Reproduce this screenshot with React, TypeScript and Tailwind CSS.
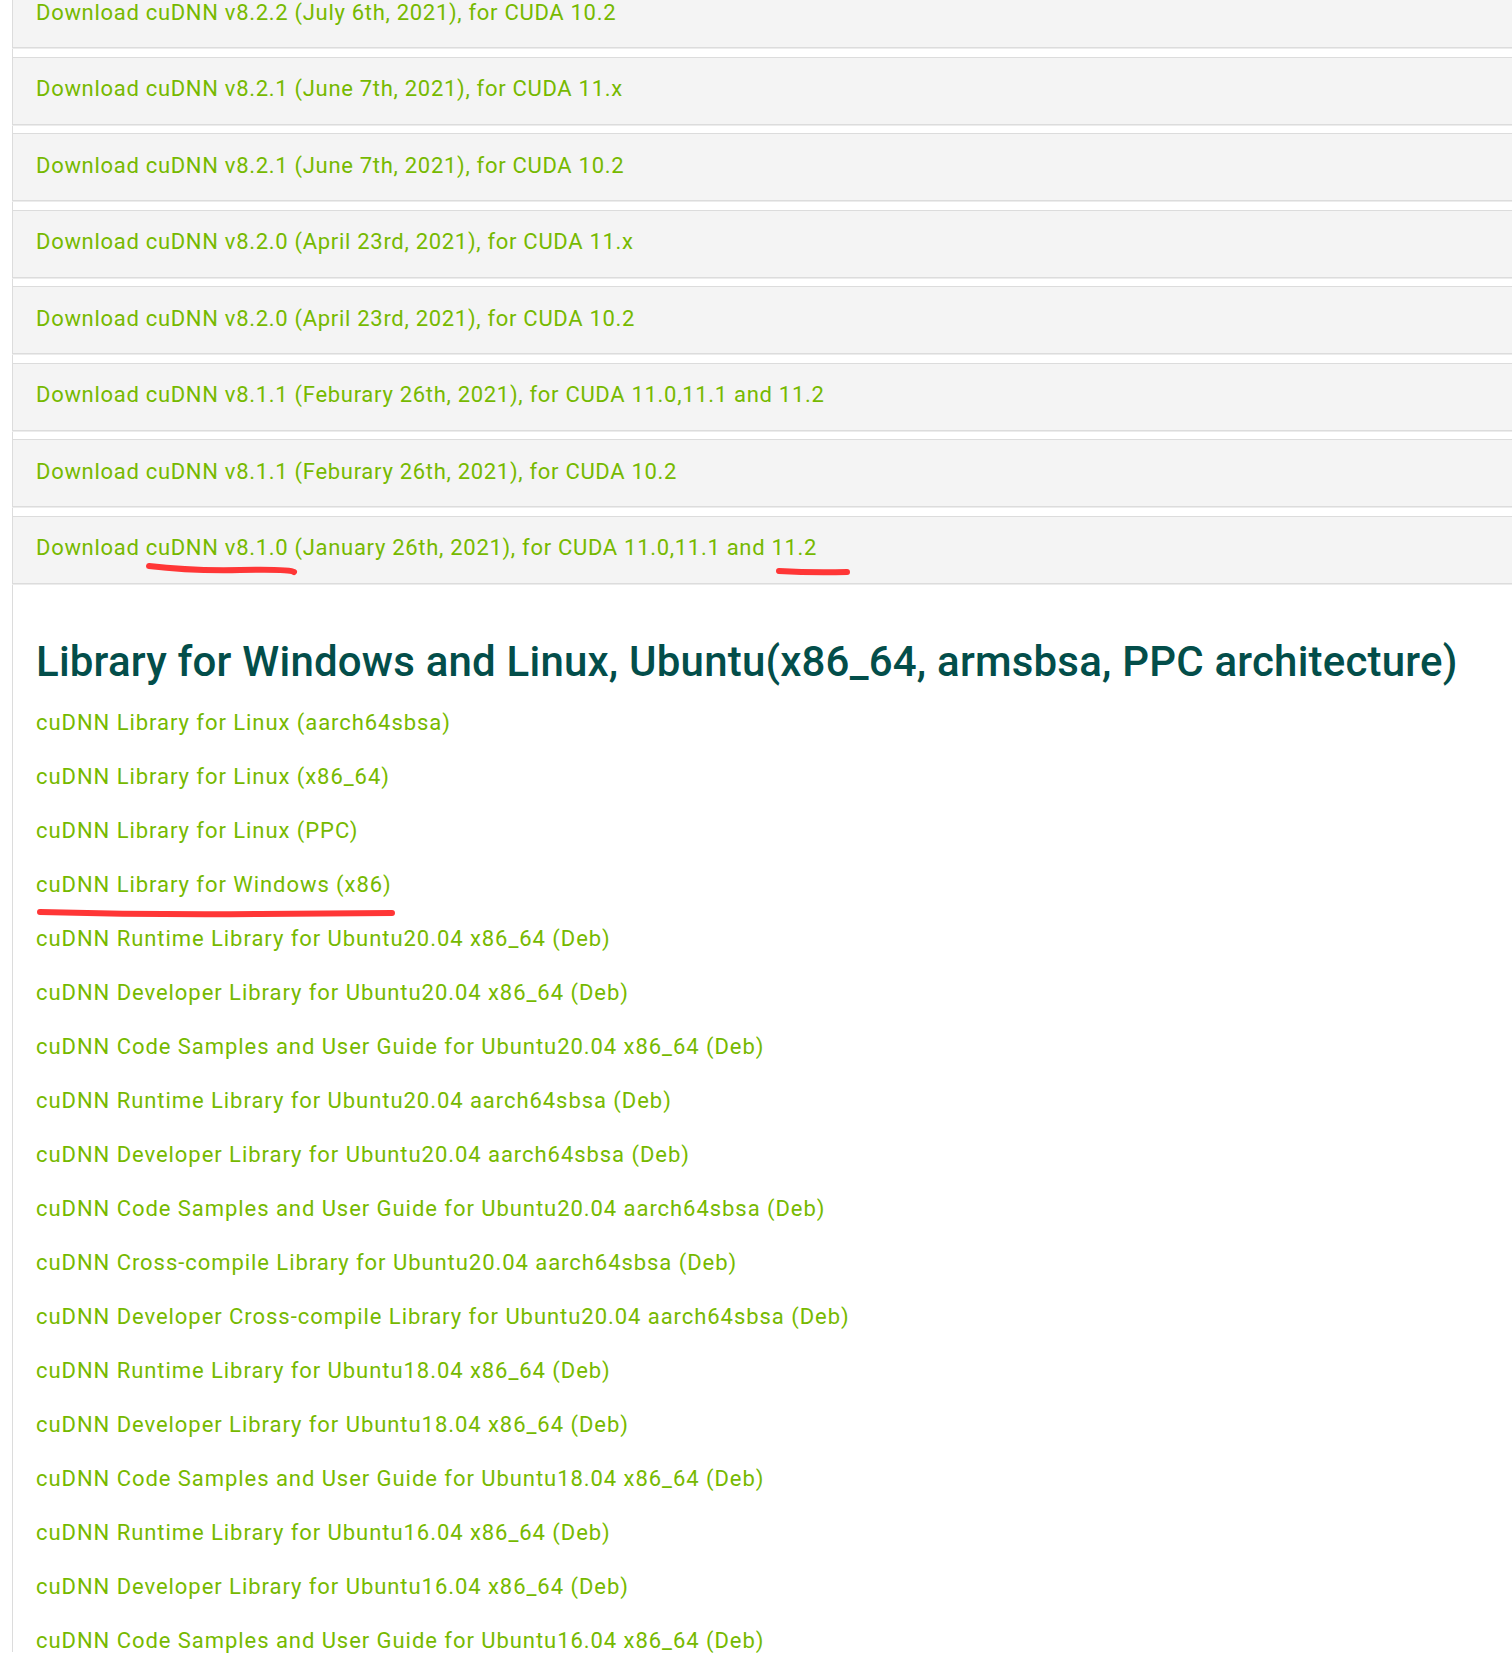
import React from "react";

const downloads = [
  "Download cuDNN v8.2.2 (July 6th, 2021), for CUDA 10.2",
  "Download cuDNN v8.2.1 (June 7th, 2021), for CUDA 11.x",
  "Download cuDNN v8.2.1 (June 7th, 2021), for CUDA 10.2",
  "Download cuDNN v8.2.0 (April 23rd, 2021), for CUDA 11.x",
  "Download cuDNN v8.2.0 (April 23rd, 2021), for CUDA 10.2",
  "Download cuDNN v8.1.1 (Feburary 26th, 2021), for CUDA 11.0,11.1 and 11.2",
  "Download cuDNN v8.1.1 (Feburary 26th, 2021), for CUDA 10.2",
  "Download cuDNN v8.1.0 (January 26th, 2021), for CUDA 11.0,11.1 and 11.2",
];

const libraries = [
  "cuDNN Library for Linux (aarch64sbsa)",
  "cuDNN Library for Linux (x86_64)",
  "cuDNN Library for Linux (PPC)",
  "cuDNN Library for Windows (x86)",
  "cuDNN Runtime Library for Ubuntu20.04 x86_64 (Deb)",
  "cuDNN Developer Library for Ubuntu20.04 x86_64 (Deb)",
  "cuDNN Code Samples and User Guide for Ubuntu20.04 x86_64 (Deb)",
  "cuDNN Runtime Library for Ubuntu20.04 aarch64sbsa (Deb)",
  "cuDNN Developer Library for Ubuntu20.04 aarch64sbsa (Deb)",
  "cuDNN Code Samples and User Guide for Ubuntu20.04 aarch64sbsa (Deb)",
  "cuDNN Cross-compile Library for Ubuntu20.04 aarch64sbsa (Deb)",
  "cuDNN Developer Cross-compile Library for Ubuntu20.04 aarch64sbsa (Deb)",
  "cuDNN Runtime Library for Ubuntu18.04 x86_64 (Deb)",
  "cuDNN Developer Library for Ubuntu18.04 x86_64 (Deb)",
  "cuDNN Code Samples and User Guide for Ubuntu18.04 x86_64 (Deb)",
  "cuDNN Runtime Library for Ubuntu16.04 x86_64 (Deb)",
  "cuDNN Developer Library for Ubuntu16.04 x86_64 (Deb)",
  "cuDNN Code Samples and User Guide for Ubuntu16.04 x86_64 (Deb)",
];

// red pen marks someone drew over the screenshot
const Marks = () => (
  <svg
    className="absolute left-0 top-0 pointer-events-none"
    width="1512"
    height="1672"
    viewBox="0 0 1512 1672"
  >
    <g fill="none" stroke="#ff3636" strokeWidth="6" strokeLinecap="round">
      <path d="M149 566 Q 190 571 240 570 T 294 572" />
      <path d="M779 571 Q 812 573 847 572" />
      <path d="M40 912 Q 150 915 260 914 T 392 913" />
    </g>
  </svg>
);

export default function App() {
  return (
    <div className="relative w-[1512px] h-[1672px] overflow-hidden bg-white font-['Roboto',sans-serif]">
      <div className="ml-3 w-[1540px] h-full border-l border-[#dcdcdc]">
        <div className="-mt-[20px] flex flex-col gap-[8.5px]">
          {downloads.map((d) => (
            <div
              key={d}
              className="h-[68px] -ml-px flex items-center pl-[23px] pb-[4px] bg-[#f4f4f4] border border-[#dcdcdc] shadow-[0_1px_0_#ececec]"
            >
              <a className="text-[22px] text-[#76b900] tracking-[0.7px]">{d}</a>
            </div>
          ))}
        </div>

        <div className="pl-[23px] pt-[53px]">
          <h2 className="text-[42px] leading-[50px] font-medium text-[#034e4a] tracking-[0.2px]">
            Library for Windows and Linux, Ubuntu(x86_64, armsbsa, PPC architecture)
          </h2>
          <ul className="mt-[9px] flex flex-col">
            {libraries.map((l) => (
              <li key={l} className="h-[54px] flex items-center">
                <a className="text-[22px] text-[#76b900] tracking-[0.95px]">{l}</a>
              </li>
            ))}
          </ul>
        </div>
      </div>
      <Marks />
    </div>
  );
}
